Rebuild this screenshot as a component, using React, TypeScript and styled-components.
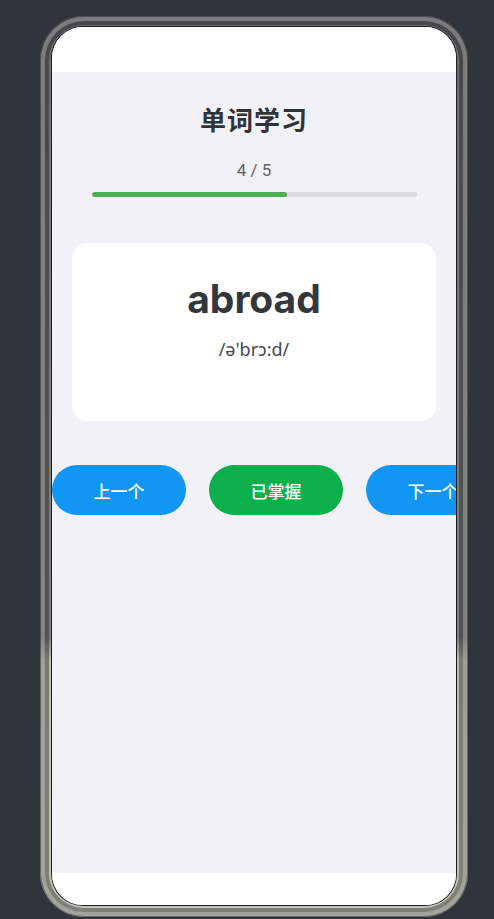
import React from 'react'
import styled, { createGlobalStyle } from 'styled-components'

const GlobalStyle = createGlobalStyle`
  html, body {
    margin: 0;
    padding: 0;
    background: #30343b;
  }
  body {
    font-family: "Inter", "Noto Sans CJK SC", sans-serif;
  }
`

const Stage = styled.div`
  width: 494px;
  height: 919px;
  padding: 16px 0 0 40px;
  box-sizing: border-box;
  background: #30343b;
`

const Frame = styled.div`
  width: 428px;
  height: 901px;
  box-sizing: border-box;
  padding: 11px 12px 12px 12px;
  border-radius: 44px;
  background: linear-gradient(
    to bottom,
    #45484c 0%,
    #55585b 40%,
    #5a5c5d 69%,
    #a9aa9c 71.5%,
    #b4b5a7 100%
  );
  box-shadow:
    inset 0 0 0 1px rgba(0, 0, 0, 0.4),
    inset 0 0 0 2px rgba(255, 255, 255, 0.05),
    inset 0 0 0 5px rgba(255, 255, 255, 0.28),
    inset 0 0 0 9px rgba(0, 0, 0, 0.35),
    inset 0 0 0 11px rgba(255, 255, 255, 0.22);
`

const Screen = styled.div`
  width: 100%;
  height: 100%;
  border-radius: 31px;
  overflow: hidden;
  display: flex;
  flex-direction: column;
  background: #f1f1f6;
  box-shadow: 0 0 0 1px #1b1d20;
`

const StatusBar = styled.div`
  height: 45px;
  flex-shrink: 0;
  background: #ffffff;
`

const HomeBar = styled.div`
  height: 32px;
  flex-shrink: 0;
  background: #ffffff;
`

const Content = styled.div`
  flex: 1;
  display: flex;
  flex-direction: column;
  padding-top: 29px;
  overflow: hidden;
`

const Title = styled.h1`
  margin: 0;
  font-size: 26px;
  line-height: 36px;
  font-weight: 700;
  text-align: center;
  color: #2f3337;
  font-family: "Noto Sans CJK SC", sans-serif;
  letter-spacing: 1px;
`

const Counter = styled.div`
  margin-top: 21px;
  font-size: 17px;
  line-height: 24px;
  text-align: center;
  color: #606266;
  font-family: "Roboto", "Noto Sans", sans-serif;
`

const Track = styled.div`
  margin: 10px 39px 0 40px;
  height: 5px;
  border-radius: 3px;
  background: #dcdcdf;
  overflow: hidden;
`

const Fill = styled.div`
  height: 100%;
  border-radius: 3px;
  background: #4cae55;
`

const Card = styled.div`
  margin: 46px 20px 0 20px;
  padding: 32px 16px 60px;
  background: #ffffff;
  border-radius: 15px;
  display: flex;
  flex-direction: column;
  align-items: center;
`

const Word = styled.div`
  font-size: 39px;
  line-height: 48px;
  font-weight: 700;
  color: #33373b;
`

const Phonetic = styled.div`
  margin-top: 14px;
  font-size: 18px;
  line-height: 24px;
  color: #44474b;
  font-family: "Noto Sans", "DejaVu Sans", sans-serif;
`

const Actions = styled.div`
  margin-top: 44px;
  display: flex;
  gap: 23px;
`

const ActionButton = styled.button<{ $tone: 'blue' | 'green' }>`
  flex-shrink: 0;
  width: 134px;
  height: 50px;
  border: none;
  border-radius: 25px;
  background: ${p => (p.$tone === 'green' ? '#0bb04b' : '#1296f3')};
  color: #ffffff;
  font-size: 17px;
  font-family: "Noto Sans CJK SC", sans-serif;
  font-weight: 500;
  padding: 0;
`

const words = [
  { word: 'abroad', phonetic: "/ə'brɔ:d/" },
]

const App: React.FC = () => {
  const index = 4
  const total = 5
  const current = words[0]
  return (
    <>
      <GlobalStyle />
      <Stage>
        <Frame>
          <Screen>
            <StatusBar />
            <Content>
              <Title>单词学习</Title>
              <Counter>{index} / {total}</Counter>
              <Track>
                <Fill style={{ width: `${((index - 1) / total) * 100}%` }} />
              </Track>
              <Card>
                <Word>{current.word}</Word>
                <Phonetic>{current.phonetic}</Phonetic>
              </Card>
              <Actions>
                <ActionButton $tone="blue">上一个</ActionButton>
                <ActionButton $tone="green">已掌握</ActionButton>
                <ActionButton $tone="blue">下一个</ActionButton>
              </Actions>
            </Content>
            <HomeBar />
          </Screen>
        </Frame>
      </Stage>
    </>
  )
}

export default App
